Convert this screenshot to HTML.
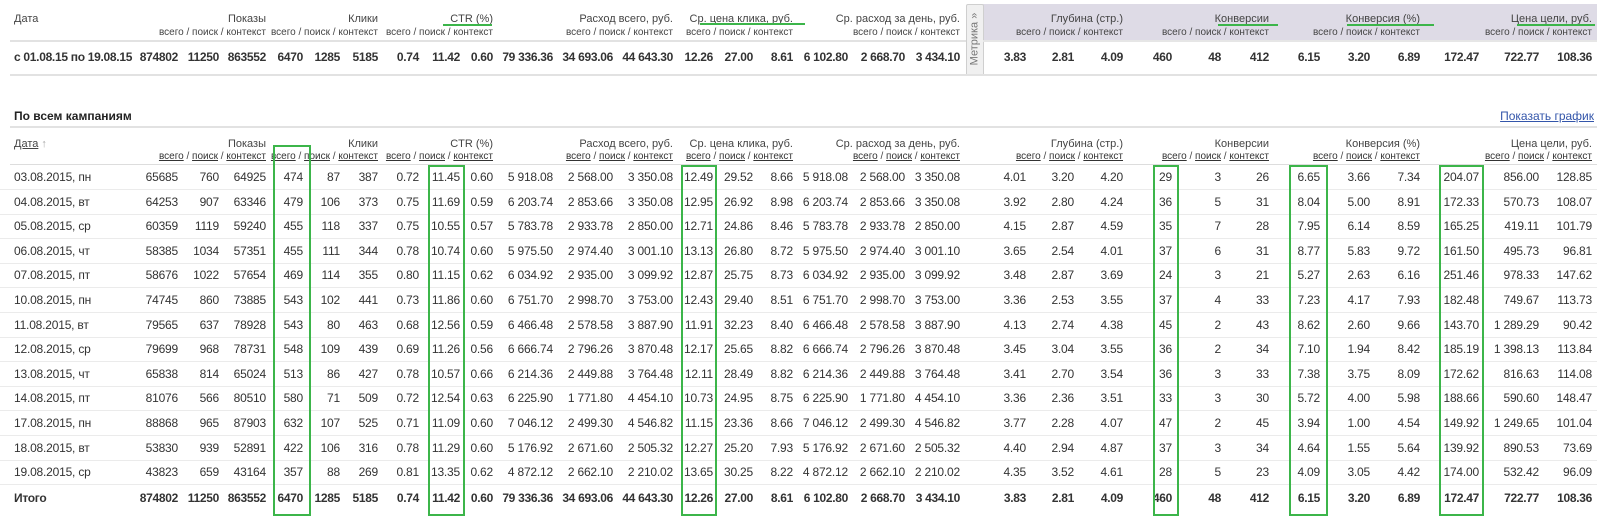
<!DOCTYPE html>
<html><head><meta charset="utf-8">
<style>
body{margin:0;width:1597px;height:520px;overflow:hidden;background:#fff;font-family:"Liberation Sans",Arial,sans-serif;color:#333;position:relative}
.abs{position:absolute}
.row{position:absolute;left:0;width:1597px;height:24px;font-size:12px;line-height:24px;letter-spacing:-0.2px}
.row span{position:absolute;width:90px;text-align:right;white-space:nowrap}
.row span:nth-child(1){left:14px;width:200px;text-align:left}
.row span:nth-child(2){left:88px}.row span:nth-child(3){left:129px}.row span:nth-child(4){left:176px}
.row span:nth-child(5){left:213px}.row span:nth-child(6){left:250px}.row span:nth-child(7){left:288px}
.row span:nth-child(8){left:329px}.row span:nth-child(9){left:370px}.row span:nth-child(10){left:403px}
.row span:nth-child(11){left:463px}.row span:nth-child(12){left:523px}.row span:nth-child(13){left:583px}
.row span:nth-child(14){left:623px}.row span:nth-child(15){left:663px}.row span:nth-child(16){left:703px}
.row span:nth-child(17){left:758px}.row span:nth-child(18){left:815px}.row span:nth-child(19){left:870px}
.row span:nth-child(20){left:936px}.row span:nth-child(21){left:984px}.row span:nth-child(22){left:1033px}
.row span:nth-child(23){left:1082px}.row span:nth-child(24){left:1131px}.row span:nth-child(25){left:1179px}
.row span:nth-child(26){left:1230px}.row span:nth-child(27){left:1280px}.row span:nth-child(28){left:1330px}
.row span:nth-child(29){left:1389px}.row span:nth-child(30){left:1449px}.row span:nth-child(31){left:1502px}
.b{font-weight:bold;letter-spacing:-0.3px}
.d{border-bottom:1px solid #ebebeb}
.h{position:absolute;font-size:11px;color:#444;text-align:right;white-space:nowrap;width:200px}
.s{position:absolute;font-size:10px;color:#444;text-align:right;white-space:nowrap;width:200px}
.s u{color:#333}
.g{position:absolute;height:2px;background:#3cb54a}
.box{position:absolute;border:2px solid #3cb54a;box-sizing:border-box}
.ln{position:absolute;left:10px;right:0;height:2px;background:#e2e2e2}
</style></head><body>
<div class="abs" style="left:983px;top:4px;width:614px;height:37px;background:#dedbe6"></div>
<div class="abs" style="left:966px;top:4px;width:16px;height:70px;background:#f0f0f0;border:1px solid #cfcfcf;border-radius:2px"></div>
<div class="abs" style="left:937px;top:32px;width:75px;height:14px;transform:rotate(-90deg);font-size:11px;color:#777;text-align:center;line-height:14px">Метрика »</div>

<div class="abs" style="left:14px;top:13px;font-size:11px;color:#444">Дата</div>
<div class="h" style="left:66px;top:13px">Показы</div><div class="s" style="left:66px;top:27px">всего / поиск / контекст</div>
<div class="h" style="left:178px;top:13px">Клики</div><div class="s" style="left:178px;top:27px">всего / поиск / контекст</div>
<div class="h" style="left:293px;top:13px">CTR (%)</div><div class="s" style="left:293px;top:27px">всего / поиск / контекст</div>
<div class="h" style="left:473px;top:13px">Расход всего, руб.</div><div class="s" style="left:473px;top:27px">всего / поиск / контекст</div>
<div class="h" style="left:593px;top:13px">Ср. цена клика, руб.</div><div class="s" style="left:593px;top:27px">всего / поиск / контекст</div>
<div class="h" style="left:760px;top:13px">Ср. расход за день, руб.</div><div class="s" style="left:760px;top:27px">всего / поиск / контекст</div>
<div class="h" style="left:923px;top:13px">Глубина (стр.)</div><div class="s" style="left:923px;top:27px">всего / поиск / контекст</div>
<div class="h" style="left:1069px;top:13px">Конверсии</div><div class="s" style="left:1069px;top:27px">всего / поиск / контекст</div>
<div class="h" style="left:1220px;top:13px">Конверсия (%)</div><div class="s" style="left:1220px;top:27px">всего / поиск / контекст</div>
<div class="h" style="left:1392px;top:13px">Цена цели, руб.</div><div class="s" style="left:1392px;top:27px">всего / поиск / контекст</div>
<div class="g" style="left:443px;top:24px;width:49px"></div>
<div class="g" style="left:700px;top:23px;width:105px"></div>
<div class="g" style="left:1218px;top:24px;width:60px"></div>
<div class="g" style="left:1347px;top:24px;width:87px"></div>
<div class="g" style="left:1517px;top:24px;width:78px"></div>
<div class="ln" style="top:40px;right:631px"></div>
<div class="ln" style="top:40px;left:983px;background:#e6e6e6"></div>
<div class="row b" style="top:45px"><span>с 01.08.15 по 19.08.15</span><span>874802</span><span>11250</span><span>863552</span><span>6470</span><span>1285</span><span>5185</span><span>0.74</span><span>11.42</span><span>0.60</span><span>79 336.36</span><span>34 693.06</span><span>44 643.30</span><span>12.26</span><span>27.00</span><span>8.61</span><span>6 102.80</span><span>2 668.70</span><span>3 434.10</span><span>3.83</span><span>2.81</span><span>4.09</span><span>460</span><span>48</span><span>412</span><span>6.15</span><span>3.20</span><span>6.89</span><span>172.47</span><span>722.77</span><span>108.36</span></div>
<div class="ln" style="top:74px"></div>

<div class="abs" style="left:14px;top:109px;font-size:12px;font-weight:bold;color:#222">По всем кампаниям</div>
<div class="abs" style="right:3px;top:109px;font-size:12px;color:#3355aa;text-decoration:underline;white-space:nowrap">Показать график</div>
<div class="ln" style="top:126px"></div>
<div class="abs" style="left:14px;top:138px;font-size:11px;color:#444"><u>Дата</u> <span style="color:#aaa">↑</span></div>
<div class="h" style="left:66px;top:138px">Показы</div><div class="s" style="left:66px;top:151px"><u>всего</u> / <u>поиск</u> / <u>контекст</u></div>
<div class="h" style="left:178px;top:138px">Клики</div><div class="s" style="left:178px;top:151px"><u>всего</u> / <u>поиск</u> / <u>контекст</u></div>
<div class="h" style="left:293px;top:138px">CTR (%)</div><div class="s" style="left:293px;top:151px"><u>всего</u> / <u>поиск</u> / <u>контекст</u></div>
<div class="h" style="left:473px;top:138px">Расход всего, руб.</div><div class="s" style="left:473px;top:151px"><u>всего</u> / <u>поиск</u> / <u>контекст</u></div>
<div class="h" style="left:593px;top:138px">Ср. цена клика, руб.</div><div class="s" style="left:593px;top:151px"><u>всего</u> / <u>поиск</u> / <u>контекст</u></div>
<div class="h" style="left:760px;top:138px">Ср. расход за день, руб.</div><div class="s" style="left:760px;top:151px"><u>всего</u> / <u>поиск</u> / <u>контекст</u></div>
<div class="h" style="left:923px;top:138px">Глубина (стр.)</div><div class="s" style="left:923px;top:151px"><u>всего</u> / <u>поиск</u> / <u>контекст</u></div>
<div class="h" style="left:1069px;top:138px">Конверсии</div><div class="s" style="left:1069px;top:151px"><u>всего</u> / <u>поиск</u> / <u>контекст</u></div>
<div class="h" style="left:1220px;top:138px">Конверсия (%)</div><div class="s" style="left:1220px;top:151px"><u>всего</u> / <u>поиск</u> / <u>контекст</u></div>
<div class="h" style="left:1392px;top:138px">Цена цели, руб.</div><div class="s" style="left:1392px;top:151px"><u>всего</u> / <u>поиск</u> / <u>контекст</u></div>
<div class="ln" style="top:164px;height:1px;background:#ddd"></div>

<div class="row d" style="top:165px"><span>03.08.2015, пн</span><span>65685</span><span>760</span><span>64925</span><span>474</span><span>87</span><span>387</span><span>0.72</span><span>11.45</span><span>0.60</span><span>5 918.08</span><span>2 568.00</span><span>3 350.08</span><span>12.49</span><span>29.52</span><span>8.66</span><span>5 918.08</span><span>2 568.00</span><span>3 350.08</span><span>4.01</span><span>3.20</span><span>4.20</span><span>29</span><span>3</span><span>26</span><span>6.65</span><span>3.66</span><span>7.34</span><span>204.07</span><span>856.00</span><span>128.85</span></div>
<div class="row d" style="top:190px"><span>04.08.2015, вт</span><span>64253</span><span>907</span><span>63346</span><span>479</span><span>106</span><span>373</span><span>0.75</span><span>11.69</span><span>0.59</span><span>6 203.74</span><span>2 853.66</span><span>3 350.08</span><span>12.95</span><span>26.92</span><span>8.98</span><span>6 203.74</span><span>2 853.66</span><span>3 350.08</span><span>3.92</span><span>2.80</span><span>4.24</span><span>36</span><span>5</span><span>31</span><span>8.04</span><span>5.00</span><span>8.91</span><span>172.33</span><span>570.73</span><span>108.07</span></div>
<div class="row d" style="top:214px"><span>05.08.2015, ср</span><span>60359</span><span>1119</span><span>59240</span><span>455</span><span>118</span><span>337</span><span>0.75</span><span>10.55</span><span>0.57</span><span>5 783.78</span><span>2 933.78</span><span>2 850.00</span><span>12.71</span><span>24.86</span><span>8.46</span><span>5 783.78</span><span>2 933.78</span><span>2 850.00</span><span>4.15</span><span>2.87</span><span>4.59</span><span>35</span><span>7</span><span>28</span><span>7.95</span><span>6.14</span><span>8.59</span><span>165.25</span><span>419.11</span><span>101.79</span></div>
<div class="row d" style="top:239px"><span>06.08.2015, чт</span><span>58385</span><span>1034</span><span>57351</span><span>455</span><span>111</span><span>344</span><span>0.78</span><span>10.74</span><span>0.60</span><span>5 975.50</span><span>2 974.40</span><span>3 001.10</span><span>13.13</span><span>26.80</span><span>8.72</span><span>5 975.50</span><span>2 974.40</span><span>3 001.10</span><span>3.65</span><span>2.54</span><span>4.01</span><span>37</span><span>6</span><span>31</span><span>8.77</span><span>5.83</span><span>9.72</span><span>161.50</span><span>495.73</span><span>96.81</span></div>
<div class="row d" style="top:263px"><span>07.08.2015, пт</span><span>58676</span><span>1022</span><span>57654</span><span>469</span><span>114</span><span>355</span><span>0.80</span><span>11.15</span><span>0.62</span><span>6 034.92</span><span>2 935.00</span><span>3 099.92</span><span>12.87</span><span>25.75</span><span>8.73</span><span>6 034.92</span><span>2 935.00</span><span>3 099.92</span><span>3.48</span><span>2.87</span><span>3.69</span><span>24</span><span>3</span><span>21</span><span>5.27</span><span>2.63</span><span>6.16</span><span>251.46</span><span>978.33</span><span>147.62</span></div>
<div class="row d" style="top:288px"><span>10.08.2015, пн</span><span>74745</span><span>860</span><span>73885</span><span>543</span><span>102</span><span>441</span><span>0.73</span><span>11.86</span><span>0.60</span><span>6 751.70</span><span>2 998.70</span><span>3 753.00</span><span>12.43</span><span>29.40</span><span>8.51</span><span>6 751.70</span><span>2 998.70</span><span>3 753.00</span><span>3.36</span><span>2.53</span><span>3.55</span><span>37</span><span>4</span><span>33</span><span>7.23</span><span>4.17</span><span>7.93</span><span>182.48</span><span>749.67</span><span>113.73</span></div>
<div class="row d" style="top:313px"><span>11.08.2015, вт</span><span>79565</span><span>637</span><span>78928</span><span>543</span><span>80</span><span>463</span><span>0.68</span><span>12.56</span><span>0.59</span><span>6 466.48</span><span>2 578.58</span><span>3 887.90</span><span>11.91</span><span>32.23</span><span>8.40</span><span>6 466.48</span><span>2 578.58</span><span>3 887.90</span><span>4.13</span><span>2.74</span><span>4.38</span><span>45</span><span>2</span><span>43</span><span>8.62</span><span>2.60</span><span>9.66</span><span>143.70</span><span>1 289.29</span><span>90.42</span></div>
<div class="row d" style="top:337px"><span>12.08.2015, ср</span><span>79699</span><span>968</span><span>78731</span><span>548</span><span>109</span><span>439</span><span>0.69</span><span>11.26</span><span>0.56</span><span>6 666.74</span><span>2 796.26</span><span>3 870.48</span><span>12.17</span><span>25.65</span><span>8.82</span><span>6 666.74</span><span>2 796.26</span><span>3 870.48</span><span>3.45</span><span>3.04</span><span>3.55</span><span>36</span><span>2</span><span>34</span><span>7.10</span><span>1.94</span><span>8.42</span><span>185.19</span><span>1 398.13</span><span>113.84</span></div>
<div class="row d" style="top:362px"><span>13.08.2015, чт</span><span>65838</span><span>814</span><span>65024</span><span>513</span><span>86</span><span>427</span><span>0.78</span><span>10.57</span><span>0.66</span><span>6 214.36</span><span>2 449.88</span><span>3 764.48</span><span>12.11</span><span>28.49</span><span>8.82</span><span>6 214.36</span><span>2 449.88</span><span>3 764.48</span><span>3.41</span><span>2.70</span><span>3.54</span><span>36</span><span>3</span><span>33</span><span>7.38</span><span>3.75</span><span>8.09</span><span>172.62</span><span>816.63</span><span>114.08</span></div>
<div class="row d" style="top:386px"><span>14.08.2015, пт</span><span>81076</span><span>566</span><span>80510</span><span>580</span><span>71</span><span>509</span><span>0.72</span><span>12.54</span><span>0.63</span><span>6 225.90</span><span>1 771.80</span><span>4 454.10</span><span>10.73</span><span>24.95</span><span>8.75</span><span>6 225.90</span><span>1 771.80</span><span>4 454.10</span><span>3.36</span><span>2.36</span><span>3.51</span><span>33</span><span>3</span><span>30</span><span>5.72</span><span>4.00</span><span>5.98</span><span>188.66</span><span>590.60</span><span>148.47</span></div>
<div class="row d" style="top:411px"><span>17.08.2015, пн</span><span>88868</span><span>965</span><span>87903</span><span>632</span><span>107</span><span>525</span><span>0.71</span><span>11.09</span><span>0.60</span><span>7 046.12</span><span>2 499.30</span><span>4 546.82</span><span>11.15</span><span>23.36</span><span>8.66</span><span>7 046.12</span><span>2 499.30</span><span>4 546.82</span><span>3.77</span><span>2.28</span><span>4.07</span><span>47</span><span>2</span><span>45</span><span>3.94</span><span>1.00</span><span>4.54</span><span>149.92</span><span>1 249.65</span><span>101.04</span></div>
<div class="row d" style="top:436px"><span>18.08.2015, вт</span><span>53830</span><span>939</span><span>52891</span><span>422</span><span>106</span><span>316</span><span>0.78</span><span>11.29</span><span>0.60</span><span>5 176.92</span><span>2 671.60</span><span>2 505.32</span><span>12.27</span><span>25.20</span><span>7.93</span><span>5 176.92</span><span>2 671.60</span><span>2 505.32</span><span>4.40</span><span>2.94</span><span>4.87</span><span>37</span><span>3</span><span>34</span><span>4.64</span><span>1.55</span><span>5.64</span><span>139.92</span><span>890.53</span><span>73.69</span></div>
<div class="row d" style="top:460px"><span>19.08.2015, ср</span><span>43823</span><span>659</span><span>43164</span><span>357</span><span>88</span><span>269</span><span>0.81</span><span>13.35</span><span>0.62</span><span>4 872.12</span><span>2 662.10</span><span>2 210.02</span><span>13.65</span><span>30.25</span><span>8.22</span><span>4 872.12</span><span>2 662.10</span><span>2 210.02</span><span>4.35</span><span>3.52</span><span>4.61</span><span>28</span><span>5</span><span>23</span><span>4.09</span><span>3.05</span><span>4.42</span><span>174.00</span><span>532.42</span><span>96.09</span></div>
<div class="row b" style="top:486px"><span>Итого</span><span>874802</span><span>11250</span><span>863552</span><span>6470</span><span>1285</span><span>5185</span><span>0.74</span><span>11.42</span><span>0.60</span><span>79 336.36</span><span>34 693.06</span><span>44 643.30</span><span>12.26</span><span>27.00</span><span>8.61</span><span>6 102.80</span><span>2 668.70</span><span>3 434.10</span><span>3.83</span><span>2.81</span><span>4.09</span><span>460</span><span>48</span><span>412</span><span>6.15</span><span>3.20</span><span>6.89</span><span>172.47</span><span>722.77</span><span>108.36</span></div>

<div class="box" style="left:273px;top:145px;width:38px;height:371px"></div>
<div class="box" style="left:428px;top:165px;width:37px;height:351px"></div>
<div class="box" style="left:681px;top:165px;width:36px;height:351px"></div>
<div class="box" style="left:1153px;top:165px;width:26px;height:351px"></div>
<div class="box" style="left:1289px;top:165px;width:39px;height:351px"></div>
<div class="box" style="left:1439px;top:165px;width:45px;height:351px"></div>
</body></html>
